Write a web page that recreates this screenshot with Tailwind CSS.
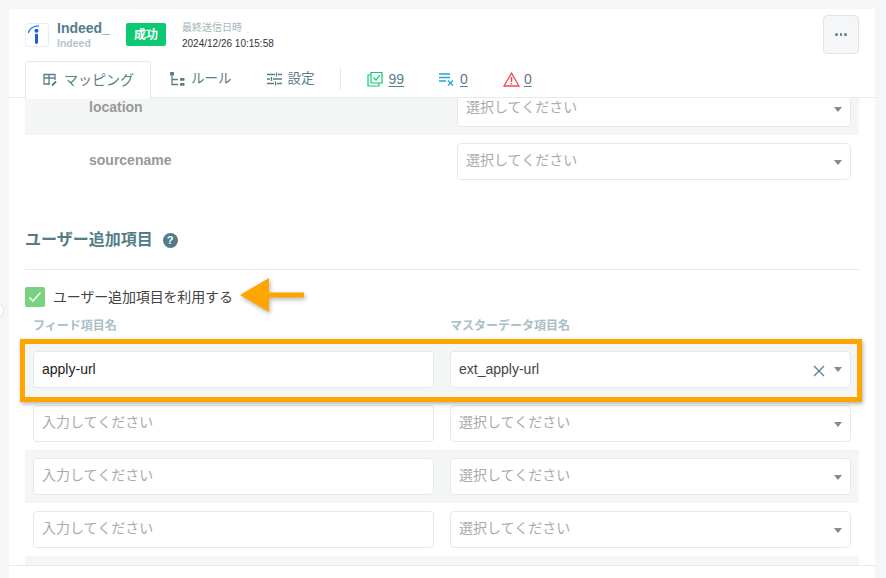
<!DOCTYPE html>
<html lang="ja">
<head>
<meta charset="utf-8">
<script src="https://cdn.jsdelivr.net/npm/@tailwindcss/browser@4"></script>
</head>
<body class="bg-[#f4f6f8]">
<div class="relative w-[886px] h-[578px] overflow-hidden bg-[#f4f6f8] pt-[9px] pl-[9px] font-['Liberation_Sans','Noto_Sans_CJK_JP',sans-serif]">
  <div class="absolute left-[-13px] top-[302px] w-[17px] h-[17px] rounded-full border border-[#dde4e6] bg-white"></div>
  <div class="relative w-[866px] h-[569px] bg-white flex flex-col">
    <!-- header -->
    <header class="relative z-10 h-[89px] shrink-0 bg-white border-b border-[#e6eaeb]">
      <div class="flex items-start pl-[16px] pt-[14px] h-[51px]">
        <div class="w-[24px] h-[24px] border border-[#e6eefb] rounded-[3px] flex items-center justify-center">
          <svg width="22" height="22" viewBox="1 1 22 22"><path d="M3.3 10 C4.5 5.5 8 2.8 14 2.8" fill="none" stroke="#2d7fe8" stroke-width="1.2"/><circle cx="11.5" cy="7.8" r="2" fill="#1c5fd8"/><rect x="10" y="10.8" width="3" height="10" rx="1" fill="#1c5fd8"/></svg>
        </div>
        <div class="ml-[8px] w-[69px]">
          <div class="text-[14px] leading-[16px] -mt-[3px] font-bold text-[#537c88]">Indeed_</div>
          <div class="text-[10.5px] leading-[12px] mt-[1px] font-bold text-[#b4c6cd]">Indeed</div>
        </div>
        <div class="w-[40px] h-[23px] rounded-[2px] bg-[#0cca73] text-white text-[12px] font-bold flex items-center justify-center">成功</div>
        <div class="ml-[16px] -mt-[2px]">
          <div class="text-[10px] leading-[14px] text-[#a5b5ba]">最終送信日時</div>
          <div class="text-[10px] leading-[14px] mt-[2px] text-[#333]">2024/12/26 10:15:58</div>
        </div>
        <button class="ml-auto mr-[16px] -mt-[8px] w-[36px] h-[39px] rounded-[4px] bg-[#f4f6f8] border border-[#dde6e8] flex items-center justify-center gap-[2px]">
          <span class="w-[2.5px] h-[2.5px] rounded-full bg-[#5a7f8b]"></span><span class="w-[2.5px] h-[2.5px] rounded-full bg-[#5a7f8b]"></span><span class="w-[2.5px] h-[2.5px] rounded-full bg-[#5a7f8b]"></span>
        </button>
      </div>
      <nav class="flex items-center pl-[16px] h-[38px] text-[#5a7d88] text-[13.5px]">
        <div class="w-[126px] h-[38px] border border-b-0 border-[#e3e9ea] rounded-t-[4px] bg-white flex items-center justify-center gap-[6px] -mb-px relative text-[14px]">
          <svg width="16" height="16" viewBox="0 0 16 16" fill="none" stroke="#5a7d88" stroke-width="1.3"><path d="M13 8V2.5H2V12H8M2 6H13M7 2.5V12"/><path d="M10 13.5l4-4" stroke-width="1.8"/></svg>
          <span>マッピング</span>
        </div>
        <div class="ml-[19px] flex items-center gap-[6px]">
          <svg width="15" height="16" viewBox="0 0 15 16" fill="none"><rect x="0" y="1" width="4" height="3.5" rx=".5" fill="#5a7d88"/><rect x="10" y="7" width="4.5" height="2.8" rx=".5" fill="#5a7d88"/><rect x="10" y="12" width="4.5" height="2.8" rx=".5" fill="#5a7d88"/><path d="M2 4.5V13.5H8M2 8.5H8" stroke="#5a7d88" stroke-width="1.3"/></svg>
          <span>ルール</span>
        </div>
        <div class="ml-[35px] flex items-center gap-[6px]">
          <svg width="15" height="14" viewBox="0 0 15 14" fill="none" stroke="#5a7d88" stroke-width="1.3"><path d="M0 2.5H8M11 2.5H15M0 7H3M6 7H15M0 11.5H7M10 11.5H15M9.5 0.5V4.5M4.5 5V9M8.5 9.5V13.5"/></svg>
          <span>設定</span>
        </div>
        <div class="ml-[25px] w-px h-[22px] bg-[#e3e9ea]"></div>
        <div class="ml-[26px] flex items-center gap-[6px]">
          <svg width="16" height="16" viewBox="0 0 16 16" fill="none" stroke="#0cca73" stroke-width="1.2"><path d="M4 1.5H15V12H4Z"/><path d="M4 4H1V15H12V12"/><path d="M6.5 6.5L9 9L13 4"/></svg>
          <span class="underline underline-offset-2 text-[14px]">99</span>
        </div>
        <div class="ml-[35px] flex items-center gap-[6px]">
          <svg width="15" height="14" viewBox="0 0 15 14" fill="none" stroke="#22aacc" stroke-width="1.4"><path d="M0 2H11M0 5.5H11M0 9H7M9 8.5L14 13.5M14 8.5L9 13.5"/></svg>
          <span class="underline underline-offset-2 text-[14px]">0</span>
        </div>
        <div class="ml-[35px] flex items-center gap-[4px]">
          <svg width="17" height="15" viewBox="0 0 17 15" fill="none"><path d="M8.5 1.2L16 14H1Z" stroke="#f8485e" stroke-width="1.3"/><path d="M8.5 5V10M8.5 11V12.6" stroke="#f8485e" stroke-width="1.5"/></svg>
          <span class="underline underline-offset-2 text-[14px]">0</span>
        </div>
      </nav>
    </header>

    <!-- scrolling body -->
    <main class="h-[468px] overflow-hidden border-b border-[#e6eaeb] px-[16px]">
      <div class="-mt-[16px]">
        <div class="h-[53px] bg-[#f4f6f6] flex items-start pt-[8px] pl-[64px] pr-[8px]">
          <div class="w-[368px] h-[36px] flex items-center pb-[2px] text-[14px] font-bold text-[#999]">location</div>
          <div class="w-[394px] h-[37px] rounded-[4px] border border-[#e4e9ea] bg-white flex items-center justify-between pl-[8px] pr-[8px] pb-[2px] text-[14px] text-[#aaa]"><span>選択してください</span><span class="w-0 h-0 mt-[3px] border-x-[4.5px] border-x-transparent border-t-[5px] border-t-[#888]"></span></div>
        </div>
        <div class="h-[53px] flex items-start pt-[8px] pl-[64px] pr-[8px]">
          <div class="w-[368px] h-[36px] flex items-center pb-[2px] text-[14px] font-bold text-[#999]">sourcename</div>
          <div class="w-[394px] h-[37px] rounded-[4px] border border-[#e4e9ea] bg-white flex items-center justify-between pl-[8px] pr-[8px] pb-[2px] text-[14px] text-[#aaa]"><span>選択してください</span><span class="w-0 h-0 mt-[3px] border-x-[4.5px] border-x-transparent border-t-[5px] border-t-[#888]"></span></div>
        </div>
        <h2 class="mt-[36px] h-[32px] flex items-center gap-[10px] text-[16px] font-bold text-[#537c88]">
          <span>ユーザー追加項目</span>
          <span class="w-[15px] h-[15px] rounded-full bg-[#537c88] text-white text-[11px] font-bold flex items-center justify-center">?</span>
        </h2>
        <div class="mt-[13px] border-t border-[#e6eaeb]"></div>
        <label class="mt-[16px] flex items-center gap-[8px] h-[22px] text-[14px] text-[#444]">
          <span class="w-[20px] h-[20px] rounded-[2px] bg-[#79d27f] flex items-center justify-center">
            <svg width="14" height="12" viewBox="0 0 14 12" fill="none" stroke="#fff" stroke-width="1.4"><path d="M1.5 6.5L5 10L12.5 1.5"/></svg>
          </span>
          <span class="tracking-[-0.15px]">ユーザー追加項目を利用する</span>
        </label>
        <div class="mt-[6px] flex pl-[8px] h-[24px] items-center text-[12px] font-bold text-[#a9bec6]">
          <div class="w-[417px]">フィード項目名</div>
          <div>マスターデータ項目名</div>
        </div>
        <div class="h-[53px] mt-[6px] bg-[#f4f6f6] flex items-start pt-[7px] px-[8px] gap-[16px]">
          <div class="w-[401px] h-[37px] rounded-[4px] border border-[#e4e9ea] bg-white flex items-center pl-[8px] text-[14px] text-[#222]">apply-url</div>
          <div class="w-[401px] h-[37px] rounded-[4px] border border-[#e4e9ea] bg-white flex items-center pl-[8px] pr-[8px] text-[14px] text-[#444]">
            <span>ext_apply-url</span>
            <svg class="ml-auto mr-[9px] mt-[2px]" width="12" height="12" viewBox="0 0 12 12" fill="none" stroke="#5a7d88" stroke-width="1.3"><path d="M1 1L11 11M11 1L1 11"/></svg>
            <span class="w-0 h-0 border-x-[4.5px] border-x-transparent border-t-[5px] border-t-[#888]"></span>
          </div>
        </div>
        <div class="h-[53px] flex items-start pt-[8px] px-[8px] gap-[16px]">
          <div class="w-[401px] h-[37px] rounded-[4px] border border-[#e4e9ea] bg-white flex items-center pl-[8px] pb-[2px] text-[14px] text-[#aaa]">入力してください</div>
          <div class="w-[401px] h-[37px] rounded-[4px] border border-[#e4e9ea] bg-white flex items-center justify-between pl-[8px] pr-[8px] pb-[2px] text-[14px] text-[#aaa]"><span>選択してください</span><span class="w-0 h-0 mt-[3px] border-x-[4.5px] border-x-transparent border-t-[5px] border-t-[#888]"></span></div>
        </div>
        <div class="h-[53px] bg-[#f4f6f6] flex items-start pt-[8px] px-[8px] gap-[16px]">
          <div class="w-[401px] h-[37px] rounded-[4px] border border-[#e4e9ea] bg-white flex items-center pl-[8px] pb-[2px] text-[14px] text-[#aaa]">入力してください</div>
          <div class="w-[401px] h-[37px] rounded-[4px] border border-[#e4e9ea] bg-white flex items-center justify-between pl-[8px] pr-[8px] pb-[2px] text-[14px] text-[#aaa]"><span>選択してください</span><span class="w-0 h-0 mt-[3px] border-x-[4.5px] border-x-transparent border-t-[5px] border-t-[#888]"></span></div>
        </div>
        <div class="h-[53px] flex items-start pt-[8px] px-[8px] gap-[16px]">
          <div class="w-[401px] h-[37px] rounded-[4px] border border-[#e4e9ea] bg-white flex items-center pl-[8px] pb-[2px] text-[14px] text-[#aaa]">入力してください</div>
          <div class="w-[401px] h-[37px] rounded-[4px] border border-[#e4e9ea] bg-white flex items-center justify-between pl-[8px] pr-[8px] pb-[2px] text-[14px] text-[#aaa]"><span>選択してください</span><span class="w-0 h-0 mt-[3px] border-x-[4.5px] border-x-transparent border-t-[5px] border-t-[#888]"></span></div>
        </div>
        <div class="h-[53px] bg-[#f4f6f6]"></div>
      </div>
    </main>
  </div>

  <!-- annotations over the screenshot -->
  <div class="absolute left-[20px] top-[339px] w-[842px] h-[63px] border-[5px] border-[#ffa500] shadow-[1px_2px_4px_rgba(0,0,0,0.3)]"></div>
  <svg class="absolute left-[238px] top-[276px] drop-shadow-[1px_2px_2px_rgba(0,0,0,0.3)]" width="68" height="38" viewBox="0 0 68 38"><path d="M2 19L31 2V16.5H66V21.5H31V36Z" fill="#ffa500"/></svg>
</div>
</body>
</html>
